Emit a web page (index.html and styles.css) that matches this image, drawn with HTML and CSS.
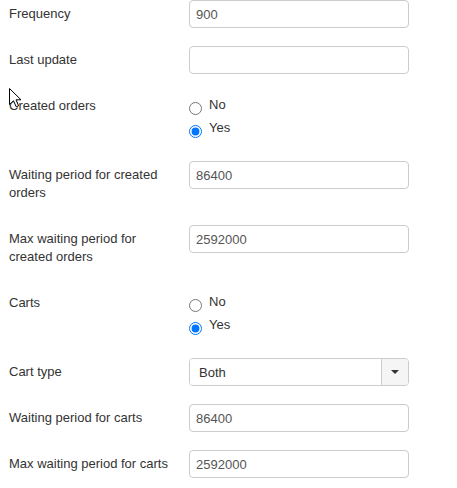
FILE: index.html
```html
<!DOCTYPE html>
<html lang="en">
<head>
    <meta charset="UTF-8">
    <meta name="viewport" content="width=device-width, initial-scale=1.0">
    <title>Abandoned orders settings</title>
    <link rel="stylesheet" href="styles.css">
</head>
<body>
    <form class="settings">
        <div class="form-row">
            <label class="row-label" for="frequency">Frequency</label>
            <input class="text-field" id="frequency" type="text" value="900">
        </div>

        <div class="form-row">
            <label class="row-label" for="lastUpdate">Last update</label>
            <input class="text-field" id="lastUpdate" type="text" value="">
        </div>

        <div class="form-row">
            <span class="row-label">Created orders</span>
            <div class="radio-group">
                <label class="radio-option"><input type="radio" name="createdOrders" value="0"> No</label>
                <label class="radio-option"><input type="radio" name="createdOrders" value="1" checked> Yes</label>
            </div>
        </div>

        <div class="form-row">
            <label class="row-label" for="waitCreated">Waiting period for created orders</label>
            <input class="text-field" id="waitCreated" type="text" value="86400">
        </div>

        <div class="form-row">
            <label class="row-label" for="maxWaitCreated">Max waiting period for created orders</label>
            <input class="text-field" id="maxWaitCreated" type="text" value="2592000">
        </div>

        <div class="form-row">
            <span class="row-label">Carts</span>
            <div class="radio-group">
                <label class="radio-option"><input type="radio" name="carts" value="0"> No</label>
                <label class="radio-option"><input type="radio" name="carts" value="1" checked> Yes</label>
            </div>
        </div>

        <div class="form-row">
            <label class="row-label" for="cartType">Cart type</label>
            <div class="select-box">
                <select id="cartType">
                    <option>Both</option>
                    <option>Guests</option>
                    <option>Customers</option>
                </select>
                <span class="select-arrow"><span class="caret"></span></span>
            </div>
        </div>

        <div class="form-row">
            <label class="row-label" for="waitCarts">Waiting period for carts</label>
            <input class="text-field" id="waitCarts" type="text" value="86400">
        </div>

        <div class="form-row">
            <label class="row-label" for="maxWaitCarts">Max waiting period for carts</label>
            <input class="text-field" id="maxWaitCarts" type="text" value="2592000">
        </div>
    </form>

    <!-- mouse pointer -->
    <svg class="pointer" width="13" height="20" viewBox="0 0 13 20">
        <path d="M0.5 0.5 L0.5 16.5 L4.5 12.8 L7.2 18.8 L9.6 17.8 L7 11.8 L12 11.8 Z" fill="#fff" stroke="#000" stroke-width="1" stroke-linejoin="miter"/>
    </svg>
</body>
</html>
```

FILE: styles.css
```css
* {
    box-sizing: border-box;
}

body {
    margin: 0;
    background: #ffffff;
    font-family: "Liberation Sans", Arial, sans-serif;
    font-size: 13px;
    color: #333;
}

.settings {
    padding-left: 9px;
}

.form-row {
    display: grid;
    grid-template-columns: 165px 220px;
    column-gap: 15px;
    align-items: start;
    margin-bottom: 18px;
}

.row-label {
    padding: 5px 0;
    line-height: 18px;
}

.text-field {
    width: 220px;
    height: 28px;
    margin: 0;
    padding: 0 6px;
    border: 1px solid #ccc;
    border-radius: 4px;
    font-family: inherit;
    font-size: 13px;
    color: #555;
    outline: none;
}

/* Yes / No switches */
.radio-group {
    display: flex;
    flex-direction: column;
    gap: 5px;
    padding: 4px 0 6px;
}

.radio-option {
    display: flex;
    align-items: flex-start;
    gap: 7px;
    height: 18px;
    line-height: 18px;
}

.radio-option input {
    width: 13px;
    height: 13px;
    margin: 6px 0 0;
    flex-shrink: 0;
}

/* Dropdown with add-on arrow */
.select-box {
    display: flex;
    width: 220px;
    height: 28px;
    border: 1px solid #ccc;
    border-radius: 4px;
    overflow: hidden;
}

.select-box select {
    flex: 1;
    appearance: none;
    -webkit-appearance: none;
    border: none;
    background: #fff;
    padding: 0 9px;
    font-family: inherit;
    font-size: 13px;
    color: #333;
    outline: none;
}

.select-arrow {
    width: 27px;
    display: flex;
    align-items: center;
    justify-content: center;
    border-left: 1px solid #ccc;
    background: #f5f5f5;
}

.caret {
    width: 0;
    height: 0;
    border-left: 4px solid transparent;
    border-right: 4px solid transparent;
    border-top: 4px solid #333;
}

.pointer {
    position: absolute;
    left: 9px;
    top: 88px;
}
```
